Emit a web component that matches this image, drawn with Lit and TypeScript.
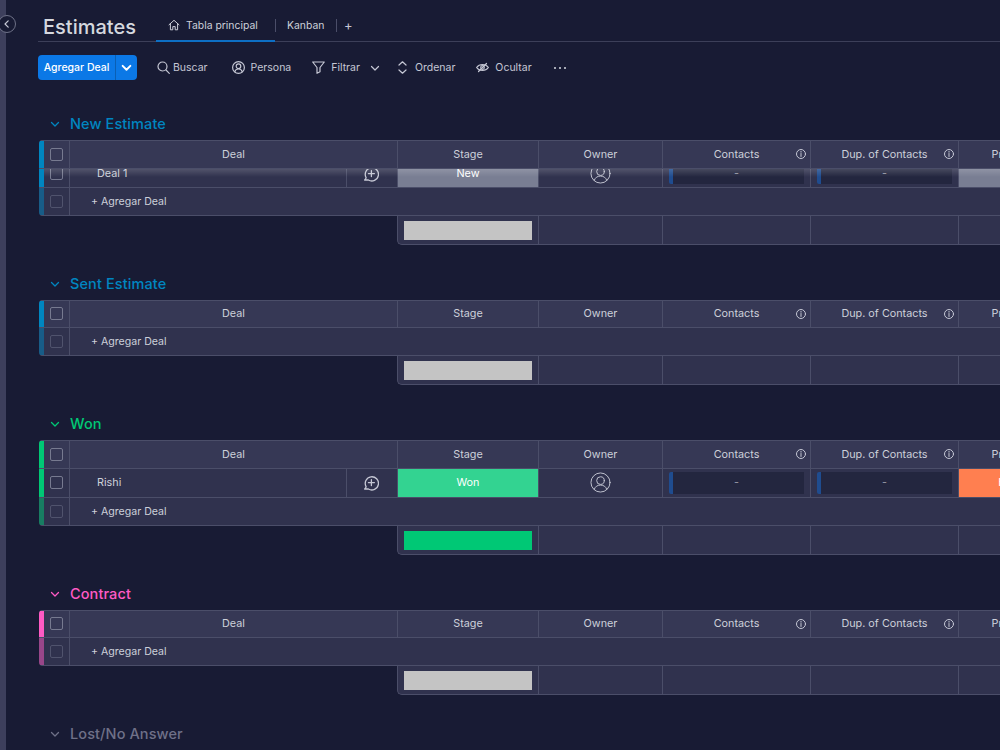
import { LitElement, html, css, nothing } from 'lit';
import { customElement } from 'lit/decorators.js';

type Row = {
  name: string;
  stage: string;
  stageClass: string;
  priority: string;
  priorityClass: string;
  clipped?: boolean;
};

type Group = {
  title: string;
  tone: string;
  rows: Row[];
  summary: string;
};

const groups: Group[] = [
  {
    title: 'New Estimate',
    tone: 'blue',
    rows: [{ name: 'Deal 1', stage: 'New', stageClass: 'grey', priority: '', priorityClass: 'grey', clipped: true }],
    summary: 'none',
  },
  { title: 'Sent Estimate', tone: 'blue', rows: [], summary: 'none' },
  {
    title: 'Won',
    tone: 'green',
    rows: [{ name: 'Rishi', stage: 'Won', stageClass: 'green', priority: 'High', priorityClass: 'orange' }],
    summary: 'won',
  },
  { title: 'Contract', tone: 'pink', rows: [], summary: 'none' },
  { title: 'Lost/No Answer', tone: 'muted', rows: [], summary: 'none' },
];

const chevron = html`<svg class="chev" viewBox="0 0 10 10"><path d="M1.5 3.5 5 7l3.5-3.5" /></svg>`;
const info = html`<svg class="info" viewBox="0 0 12 12">
  <circle cx="6" cy="6" r="4.5" />
  <path d="M6 5.500v3M6 3.400v.8" />
</svg>`;
const updateIcon = html`<svg class="update" viewBox="0 0 16 16">
  <path d="M3.100 11.600A6.600 6.600 0 1 1 5.400 14H1.600c.9-.6 1.400-1.400 1.500-2.400Z" />
  <path d="M8.400 4.600v6M5.400 7.600h6" />
</svg>`;
const personIcon = html`<svg class="person" viewBox="0 0 22 22">
  <circle cx="11" cy="11" r="10" />
  <circle cx="11" cy="9" r="4" />
  <path d="M4.400 18.200c1-3 3.400-4.500 6.600-4.500s5.600 1.500 6.600 4.500" />
</svg>`;

@customElement('app-root')
export class AppRoot extends LitElement {
  static styles = css`
    :host {
      display: block;
      position: relative;
      width: 1000px;
      height: 750px;
      overflow: hidden;
      background: #181b34;
      color: #cdd0da;
      font-family: Inter, 'Liberation Sans', sans-serif;
      font-size: 10.8px;
    }
    svg {
      fill: none;
      stroke: currentColor;
      stroke-width: 1.2;
      stroke-linecap: round;
      stroke-linejoin: round;
      flex: none;
    }
    .layout {
      display: flex;
      height: 750px;
    }
    .sidebar {
      width: 6px;
      flex: none;
      background: #3d3f5c;
    }
    .collapse {
      position: absolute;
      left: -2px;
      top: 15px;
      width: 18px;
      height: 18px;
      box-sizing: border-box;
      border: 1px solid #6f7288;
      border-radius: 50%;
      background: #181b34;
      display: flex;
      align-items: center;
      justify-content: center;
      color: #c5c7d4;
    }
    .collapse svg {
      width: 10px;
      height: 10px;
    }
    .main {
      flex: 1;
      min-width: 0;
      padding-left: 32px;
    }

    .tabs {
      height: 41px;
      display: flex;
      align-items: center;
      border-bottom: 1px solid #3c3f59;
      font-size: 10.4px;
    }
    h1 {
      margin: 0 0 0 5px;
      padding-top: 13px;
      width: 113px;
      font-size: 20px;
      font-weight: 500;
      color: #d5d8df;
    }
    .tab {
      height: 41px;
      box-sizing: border-box;
      display: flex;
      align-items: center;
      position: relative;
      padding-top: 9px;
    }
    .tab.active {
      width: 119px;
      padding-left: 12px;
      gap: 6px;
    }
    .tab.active::after {
      content: '';
      position: absolute;
      left: 0;
      right: 0;
      bottom: -1px;
      height: 2px;
      background: #0d6fc4;
    }
    .tab.active svg {
      width: 12px;
      height: 12px;
      stroke-width: 1;
    }
    .tab.kanban {
      width: 60px;
      padding-left: 11px;
    }
    .sep {
      width: 1px;
      height: 13px;
      margin-top: 9px;
      background: #4b4e69;
    }
    .plus {
      margin: 9px 0 0 7px;
      font-size: 13px;
      color: #c5c7d4;
    }

    .toolbar {
      height: 25px;
      margin-top: 13px;
      display: flex;
      align-items: center;
      color: #c5c7d4;
      font-size: 10.5px;
    }
    .add {
      width: 99px;
      height: 25px;
      display: flex;
      border-radius: 4px;
      overflow: hidden;
      background: #0b78e6;
      color: #fff;
      font-weight: 500;
      margin-right: 20px;
    }
    .add .label {
      width: 77px;
      display: flex;
      align-items: center;
      justify-content: center;
      border-right: 1px solid #0a5fb4;
    }
    .add .more {
      flex: 1;
      display: flex;
      align-items: center;
      justify-content: center;
    }
    .add .more svg {
      width: 11px;
      height: 11px;
      stroke-width: 1.8;
    }
    .tool {
      display: flex;
      align-items: center;
      gap: 5px;
    }
    .tool svg {
      width: 13px;
      height: 13px;
    }
    .tool.search {
      margin-right: 24px;
      gap: 3px;
    }
    .tool.persona {
      margin-right: 21px;
      gap: 6px;
    }
    .tool.filter {
      gap: 6px;
    }
    .tool.filter .chev {
      width: 10px;
      height: 10px;
      margin: 0 18px 0 4px;
    }
    .tool.sort {
      margin-right: 21px;
      gap: 8px;
    }
    .tool.sort svg {
      width: 9px;
    }
    .tool.hide {
      margin-right: 21px;
      gap: 6px;
    }
    .dots {
      display: flex;
      gap: 3px;
      padding-left: 1px;
    }
    .dots i {
      width: 2px;
      height: 2px;
      border-radius: 50%;
      background: #d5d8df;
    }

    .groups {
      margin-top: 5px;
      margin-left: 1px;
    }
    .group-title {
      height: 55px;
      box-sizing: border-box;
      display: flex;
      align-items: flex-end;
      gap: 10px;
      padding: 0 0 4px 11px;
      font-size: 14.5px;
      font-weight: 500;
      line-height: 24px;
      letter-spacing: 0.1px;
    }
    .group-title .chev {
      width: 10px;
      height: 10px;
      margin-bottom: 7px;
      stroke-width: 1.3;
    }
    .blue .group-title {
      color: #0086c0;
    }
    .green .group-title {
      color: #00c875;
    }
    .pink .group-title {
      color: #ff5ac4;
    }
    .muted .group-title {
      color: #6f7188;
    }

    .table {
      width: 1022px;
      border-radius: 4px 0 0 4px;
      overflow: hidden;
      background: #30324e;
      position: relative;
    }
    .row {
      display: grid;
      grid-template-columns: 5px 26px 328px 141px 124px 148px 148px 102px;
      box-sizing: border-box;
      border-bottom: 1px solid #4b4e69;
      position: relative;
    }
    .row.header {
      height: 28.5px;
      background: #363855;
      border-top: 1px solid #4b4e69;
    }
    .row.item {
      height: 29px;
    }
    .row.clipped {
      height: 19px;
      overflow: hidden;
    }
    .row.clipped > * {
      margin-top: -8px;
    }
    .row.clipped::after {
      content: '';
      position: absolute;
      left: 5px;
      right: 0;
      top: 0;
      height: 8px;
      background: linear-gradient(rgba(255, 255, 255, 0.16), rgba(255, 255, 255, 0));
    }
    .row.adder {
      height: 28px;
      grid-template-columns: 5px 26px 1fr;
    }
    .edge {
      background: var(--tone);
    }
    .adder .edge {
      opacity: 0.5;
    }
    .blue {
      --tone: #0086c0;
    }
    .green {
      --tone: #00c875;
    }
    .pink {
      --tone: #ff5ac4;
    }
    .muted {
      --tone: #6f7188;
    }
    .cell {
      border-right: 1px solid #4b4e69;
      display: flex;
      align-items: center;
      justify-content: center;
      box-sizing: border-box;
      min-width: 0;
      white-space: nowrap;
      position: relative;
    }
    .cell:last-child {
      border-right: 0;
    }
    .check {
      padding-right: 1px;
    }
    .box {
      width: 13px;
      height: 13px;
      box-sizing: border-box;
      border: 1px solid #777a90;
      border-radius: 2px;
    }
    .adder .box {
      border-color: #50536d;
    }
    .header .cell .info {
      position: absolute;
      right: 3px;
      width: 12px;
      height: 12px;
      color: #c5c7d4;
      stroke-width: 1;
    }
    .name {
      justify-content: flex-start;
      display: grid;
      grid-template-columns: 276px 51px;
    }
    .name .text {
      padding-left: 27px;
    }
    .name .upd {
      height: 100%;
      border-left: 1px solid #4b4e69;
      box-sizing: border-box;
      display: flex;
      align-items: center;
      justify-content: center;
      padding-right: 2px;
    }
    .update {
      width: 16px;
      height: 16px;
      color: #c5c7d4;
      stroke-width: 1.3;
    }
    .status {
      color: #fff;
    }
    .status.grey {
      background: #797e93;
    }
    .status.green {
      background: #33d391;
    }
    .status.orange {
      background: #ff7f50;
    }
    .person {
      width: 21px;
      height: 21px;
      color: #c5c7d4;
      stroke-width: 1;
    }
    .contact {
      padding: 3px 6px;
    }
    .contact .well {
      flex: 1;
      height: 100%;
      display: flex;
      align-items: center;
      justify-content: center;
      background: #23263f;
      border-left: 4px solid #1f4c8f;
      border-radius: 2px 0 0 2px;
      color: #9699a6;
      box-sizing: border-box;
      padding-right: 4px;
    }
    .addtext {
      grid-column: 3;
      justify-content: flex-start;
      padding-left: 21px;
      font-size: 10.6px;
    }

    .summary {
      margin-left: 358px;
      width: 664px;
      height: 29px;
      display: grid;
      grid-template-columns: 141px 124px 148px 148px 102px;
      background: #30324e;
      border-left: 1px solid #4b4e69;
      border-bottom: 1px solid #4b4e69;
      border-radius: 0 0 0 5px;
      box-sizing: border-box;
    }
    .summary .cell {
      padding: 5px 6px 4px;
    }
    .bar {
      width: 100%;
      height: 100%;
      background: #c4c4c4;
    }
    .bar.won {
      background: #00c875;
    }
  `;

  renderRow(r: Row) {
    return html`<div class="row item ${r.clipped ? 'clipped' : ''}">
      <div class="edge"></div>
      <div class="cell check"><span class="box"></span></div>
      <div class="cell name">
        <span class="text">${r.name}</span>
        <span class="upd">${updateIcon}</span>
      </div>
      <div class="cell status ${r.stageClass}">${r.stage}</div>
      <div class="cell">${personIcon}</div>
      <div class="cell contact"><div class="well">-</div></div>
      <div class="cell contact"><div class="well">-</div></div>
      <div class="cell status ${r.priorityClass}">${r.priority}</div>
    </div>`;
  }

  renderGroup(g: Group) {
    return html`<section class=${g.tone}>
      <div class="group-title">${chevron}<span>${g.title}</span></div>
      ${g.tone === 'muted'
        ? nothing
        : html`<div class="table">
              <div class="row header">
                <div class="edge"></div>
                <div class="cell check"><span class="box"></span></div>
                <div class="cell">Deal</div>
                <div class="cell">Stage</div>
                <div class="cell">Owner</div>
                <div class="cell">Contacts${info}</div>
                <div class="cell">Dup. of Contacts${info}</div>
                <div class="cell">Priority</div>
              </div>
              ${g.rows.map((r) => this.renderRow(r))}
              <div class="row adder">
                <div class="edge"></div>
                <div class="cell check"><span class="box"></span></div>
                <div class="cell addtext">+ Agregar Deal</div>
              </div>
            </div>
            <div class="summary">
              <div class="cell"><div class="bar ${g.summary === 'won' ? 'won' : ''}"></div></div>
              <div class="cell"></div>
              <div class="cell"></div>
              <div class="cell"></div>
              <div class="cell"></div>
            </div>`}
    </section>`;
  }

  render() {
    return html`<div class="layout">
      <div class="sidebar"></div>
      <div class="collapse">
        <svg viewBox="0 0 10 10"><path d="M6.200 1.800 3 5l3.200 3.200" /></svg>
      </div>
      <div class="main">
        <div class="tabs">
          <h1>Estimates</h1>
          <div class="tab active">
            <svg viewBox="0 0 12 12"><path d="M1 5.800 6 1.300l5 4.500M2.400 4.800v6h2.400V7.600h2.400v3.200h2.400v-6" /></svg>
            Tabla principal
          </div>
          <div class="sep"></div>
          <div class="tab kanban">Kanban</div>
          <div class="sep"></div>
          <span class="plus">+</span>
        </div>
        <div class="toolbar">
          <div class="add">
            <div class="label">Agregar Deal</div>
            <div class="more">${chevron}</div>
          </div>
          <div class="tool search">
            <svg viewBox="0 0 13 13"><circle cx="5.500" cy="5.500" r="4.500" /><path d="m9 9 3.300 3.300" /></svg>
            Buscar
          </div>
          <div class="tool persona">
            <svg viewBox="0 0 13 13">
              <circle cx="6.500" cy="6.500" r="5.900" />
              <circle cx="6.500" cy="5.200" r="2.300" />
              <path d="M2.700 10.800c.6-1.800 2-2.800 3.800-2.800s3.200 1 3.800 2.800" />
            </svg>
            Persona
          </div>
          <div class="tool filter">
            <svg viewBox="0 0 13 13"><path d="M.7 1h11.600L8 6.500v4.300l-3 1.500V6.500Z" /></svg>
            Filtrar ${chevron}
          </div>
          <div class="tool sort">
            <svg viewBox="0 0 9 13"><path d="M1 4 4.500.8 8 4M1 9l3.500 3.200L8 9" /></svg>
            Ordenar
          </div>
          <div class="tool hide">
            <svg viewBox="0 0 13 13">
              <path d="M.6 6.500C2 4.600 4 3.500 6.500 3.500s4.500 1.100 5.900 3c-1.400 1.900-3.400 3-5.900 3S2 8.400.6 6.500Z" />
              <circle cx="6.500" cy="6.500" r="1.800" />
              <path d="M2.500 10.500 10.500 2.500" />
            </svg>
            Ocultar
          </div>
          <div class="dots"><i></i><i></i><i></i></div>
        </div>
        <div class="groups">${groups.map((g) => this.renderGroup(g))}</div>
      </div>
    </div>`;
  }
}
